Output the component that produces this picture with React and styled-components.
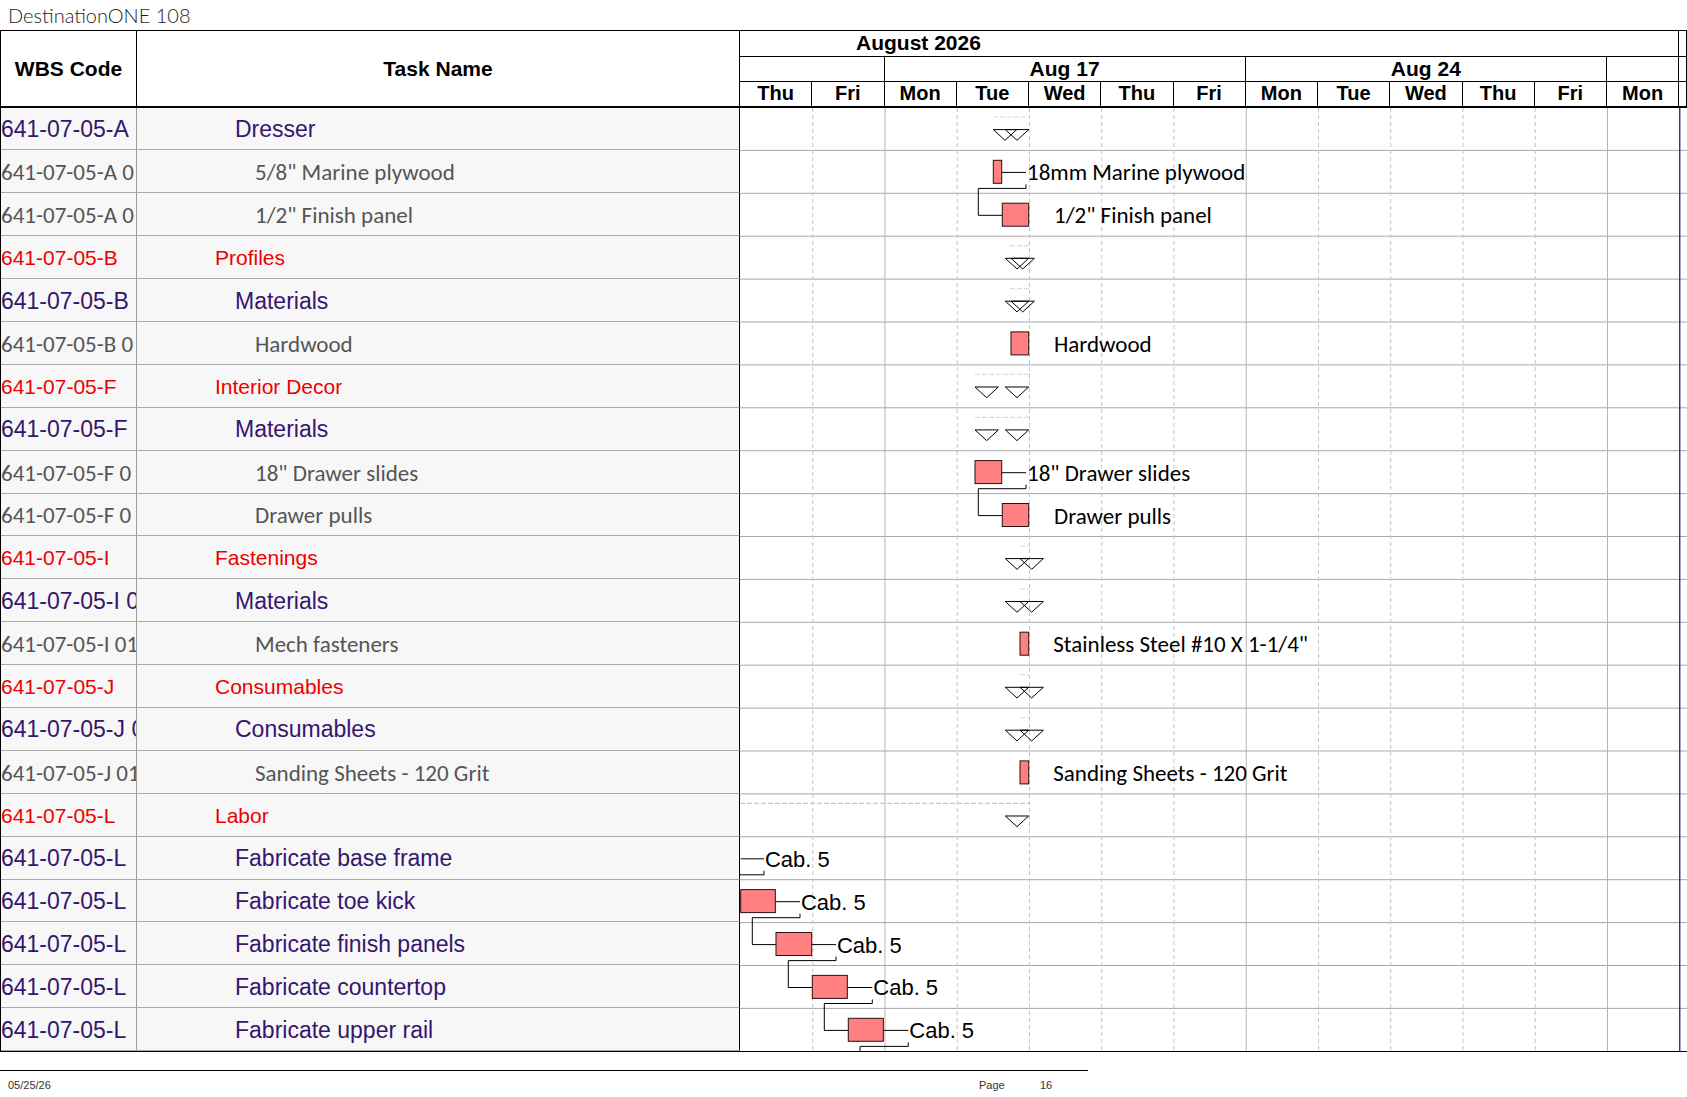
import React from "react";
import styled, { createGlobalStyle, css } from "styled-components";

const DAY_W = 72.25;
const ROW_H = 42.9;
const CHART_W = 947;

const ARIAL = '"Liberation Sans", Arial, sans-serif';
const CALIBRI = 'Carlito, Calibri, Lato, "Open Sans", sans-serif';

const kinds = {
  group: { color: "#ee0000", font: ARIAL, size: 21, indent: 78 },
  sub: { color: "#35166f", font: ARIAL, size: 23, indent: 98 },
  item: { color: "#555555", font: CALIBRI, size: 23, indent: 118 },
};

const rows = [
  { wbs: "641-07-05-A", name: "Dresser", kind: "sub" },
  { wbs: "641-07-05-A 0", name: '5/8" Marine plywood', kind: "item" },
  { wbs: "641-07-05-A 0", name: '1/2" Finish panel', kind: "item" },
  { wbs: "641-07-05-B", name: "Profiles", kind: "group" },
  { wbs: "641-07-05-B", name: "Materials", kind: "sub" },
  { wbs: "641-07-05-B 0", name: "Hardwood", kind: "item" },
  { wbs: "641-07-05-F", name: "Interior Decor", kind: "group" },
  { wbs: "641-07-05-F", name: "Materials", kind: "sub" },
  { wbs: "641-07-05-F 0", name: '18" Drawer slides', kind: "item" },
  { wbs: "641-07-05-F 0", name: "Drawer pulls", kind: "item" },
  { wbs: "641-07-05-I", name: "Fastenings", kind: "group" },
  { wbs: "641-07-05-I 01", name: "Materials", kind: "sub" },
  { wbs: "641-07-05-I 01", name: "Mech fasteners", kind: "item" },
  { wbs: "641-07-05-J", name: "Consumables", kind: "group" },
  { wbs: "641-07-05-J 01", name: "Consumables", kind: "sub" },
  { wbs: "641-07-05-J 01", name: "Sanding Sheets - 120 Grit", kind: "item" },
  { wbs: "641-07-05-L", name: "Labor", kind: "group" },
  { wbs: "641-07-05-L", name: "Fabricate base frame", kind: "sub" },
  { wbs: "641-07-05-L", name: "Fabricate toe kick", kind: "sub" },
  { wbs: "641-07-05-L", name: "Fabricate finish panels", kind: "sub" },
  { wbs: "641-07-05-L", name: "Fabricate countertop", kind: "sub" },
  { wbs: "641-07-05-L", name: "Fabricate upper rail", kind: "sub" },
];

const days = ["Thu", "Fri", "Mon", "Tue", "Wed", "Thu", "Fri", "Mon", "Tue", "Wed", "Thu", "Fri", "Mon"];
const mondays = [2, 7, 12];

// chart items, x in px from the chart's left edge
const bars = [
  { r: 1, x1: 253.3, x2: 261.7, lead: 286, label: "18mm Marine plywood" },
  { r: 2, x1: 262.3, x2: 288.7, labelX: 314, label: '1/2" Finish panel' },
  { r: 5, x1: 271, x2: 288.7, labelX: 314, label: "Hardwood" },
  { r: 8, x1: 235, x2: 261.7, lead: 286, label: '18" Drawer slides' },
  { r: 9, x1: 262.3, x2: 288.7, labelX: 314, label: "Drawer pulls" },
  { r: 12, x1: 280, x2: 288.7, labelX: 313.3, label: 'Stainless Steel #10 X 1-1/4"' },
  { r: 15, x1: 280, x2: 288.7, labelX: 313.3, label: "Sanding Sheets - 120 Grit" },
  { r: 17, x1: 0.7, x2: 0.7, lead: 24, label: "Cab. 5", arial: true, noBox: true },
  { r: 18, x1: 0.7, x2: 35.3, lead: 60, label: "Cab. 5", arial: true },
  { r: 19, x1: 36, x2: 71.7, lead: 96, label: "Cab. 5", arial: true },
  { r: 20, x1: 72.3, x2: 107.3, lead: 132.3, label: "Cab. 5", arial: true },
  { r: 21, x1: 108.3, x2: 143.3, lead: 168.3, label: "Cab. 5", arial: true },
];

const links = [
  { r: 1, from: 286, turn: 238.3, to: 262.3 },
  { r: 8, from: 286, turn: 238.3, to: 262.3 },
  { r: 17, from: 24, turn: -20, to: 0.7 },
  { r: 18, from: 60, turn: 12.3, to: 36 },
  { r: 19, from: 96, turn: 48.3, to: 72.3 },
  { r: 20, from: 132.3, turn: 84.3, to: 108.3 },
  { r: 21, from: 168.3, turn: 120, to: 144.3 },
];

const summaries = [
  { r: 0, xs: [253.3, 265.3], dash: [253, 289] },
  { r: 3, xs: [265.3, 271], dash: [270, 289] },
  { r: 4, xs: [265.3, 271], dash: [270, 289] },
  { r: 6, xs: [235, 265.3], dash: [235, 289] },
  { r: 7, xs: [235, 265.3], dash: [235, 289] },
  { r: 10, xs: [265.3, 280], dash: [280, 289] },
  { r: 11, xs: [265.3, 280], dash: [280, 289] },
  { r: 13, xs: [265.3, 280], dash: [280, 289] },
  { r: 14, xs: [265.3, 280], dash: [280, 289] },
  { r: 16, xs: [265.3], dash: [0, 289], strong: true },
];

const GlobalStyle = createGlobalStyle`
  * { box-sizing: border-box; }
  html, body { margin: 0; padding: 0; background: #fff; }
  body { font-family: ${ARIAL}; color: #000; }
`;

const Page = styled.div`
  width: 1687px;
  height: 1097px;
  overflow: hidden;
  background: #fff;
`;

const Title = styled.div`
  height: 30px;
  padding-left: 8px;
  display: flex;
  align-items: center;
  font-family: Lato, "Open Sans", sans-serif;
  font-weight: 300;
  font-size: 20px;
  color: #1e1e1e;
`;

const Sheet = styled.div`
  width: 1687px;
  border-top: 1.5px solid #000;
  border-left: 1px solid #000;
  border-bottom: 1.5px solid #000;
`;

const Header = styled.div`
  display: grid;
  grid-template-columns: 136px 603px ${CHART_W}px;
  grid-template-rows: 25.5px 25.5px 25.5px;
`;

const ColumnHead = styled.div`
  grid-row: 1 / 4;
  display: flex;
  align-items: center;
  justify-content: center;
  padding-top: 2px;
  border-right: 1px solid #000;
  border-bottom: 2px solid #000;
  font-weight: bold;
  font-size: 21px;
`;

const Timescale = styled.div`
  grid-column: 3;
  grid-row: 1 / 4;
  display: grid;
  grid-template-columns: repeat(13, ${DAY_W}px) 1fr;
  grid-template-rows: 25.5px 25.5px 25.5px;
`;

const ScaleCell = styled.div`
  grid-column: span ${(p) => p.$span || 1};
  display: flex;
  align-items: center;
  justify-content: ${(p) => (p.$left ? "flex-start" : "center")};
  padding-left: ${(p) => p.$left || 0}px;
  border-right: 1px solid #000;
  border-bottom: ${(p) => (p.$thick ? 2 : 1)}px solid #000;
  font-weight: bold;
  font-size: ${(p) => p.$size || 20}px;
  white-space: nowrap;
`;

const Body = styled.div`
  display: grid;
  grid-template-columns: 136px 603px ${CHART_W}px;
  grid-auto-rows: ${ROW_H}px;
`;

const kindText = css`
  color: ${(p) => kinds[p.$kind].color};
  font-family: ${(p) => kinds[p.$kind].font};
  font-size: ${(p) => kinds[p.$kind].size}px;
`;

const WbsCell = styled.div`
  display: flex;
  align-items: center;
  padding-top: 2px;
  overflow: hidden;
  white-space: nowrap;
  background: #f7f7f7;
  border-right: 1px solid #9a9a9a;
  border-bottom: 1px solid #a8a8a8;
  ${kindText}
`;

const TaskCell = styled.div`
  display: flex;
  align-items: center;
  padding-top: 2px;
  overflow: hidden;
  white-space: nowrap;
  padding-left: ${(p) => kinds[p.$kind].indent}px;
  background: #f7f7f7;
  border-right: 1px solid #000;
  border-bottom: 1px solid #a8a8a8;
  ${kindText}
`;

const Chart = styled.svg`
  grid-column: 3;
  grid-row: 1 / span ${rows.length};
  display: block;
  background: #fff;
  overflow: hidden;
`;

const Footer = styled.div`
  margin-top: 17.5px;
  width: 1088px;
  border-top: 1px solid #000;
  height: 28px;
  padding-left: 8px;
  padding-top: 2px;
  display: grid;
  grid-template-columns: 971px 61px auto;
  align-items: center;
  font-size: 11px;
  color: #333;
`;

const top = (r) => r * ROW_H;

const GanttChart = () => {
  const height = rows.length * ROW_H;
  return (
    <Chart width={CHART_W} height={height} viewBox={`0 0 ${CHART_W} ${height}`}>
      {rows.slice(0, -1).map((_, r) => (
        <line key={`h${r}`} x1="0" x2={CHART_W} y1={top(r + 1) - 0.5} y2={top(r + 1) - 0.5} stroke="#a8a8a8" strokeWidth="1" />
      ))}
      {days.slice(1).map((_, i) => {
        const x = (i + 1) * DAY_W + 0.5;
        const solid = mondays.includes(i + 1);
        return (
          <line
            key={`v${i}`}
            x1={x}
            x2={x}
            y1="0"
            y2={height}
            stroke={solid ? "#b4b4b4" : "#c4c4c4"}
            strokeWidth="1"
            strokeDasharray={solid ? undefined : "4 3"}
          />
        );
      })}
      <line x1={13 * DAY_W + 0.5} x2={13 * DAY_W + 0.5} y1="0" y2={height} stroke="#1c1c8e" strokeWidth="1.3" />

      {summaries.map((s) => (
        <g key={`s${s.r}`}>
          <line
            x1={s.dash[0]}
            x2={s.dash[1]}
            y1={top(s.r) + 9}
            y2={top(s.r) + 9}
            stroke={s.strong ? "#c6c6c6" : "#dcdcdc"}
            strokeWidth="1.2"
            strokeDasharray="5 2"
          />
          {s.xs.map((x) => (
            <path
              key={x}
              d={`M${x} ${top(s.r) + 21.6} h23.4 l-11.7 10.7 z`}
              fill="none"
              stroke="#000"
              strokeWidth="1"
            />
          ))}
        </g>
      ))}

      {links.map((l) => {
        const y0 = top(l.r) + 33.5;
        const y1 = top(l.r) + 37.5;
        const y2 = top(l.r + 1) + 21.5;
        return (
          <path
            key={`l${l.r}`}
            d={`M${l.from} ${y0} V${y1} H${l.turn} V${y2} H${l.to}`}
            fill="none"
            stroke="#000"
            strokeWidth="1"
          />
        );
      })}

      {bars.map((b) => {
        const cy = top(b.r) + 21.5;
        return (
          <g key={`b${b.r}`}>
            {!b.noBox && (
              <rect x={b.x1} y={top(b.r) + 9.4} width={b.x2 - b.x1} height="23" fill="#ff8080" stroke="#2a1010" strokeWidth="1" />
            )}
            {b.lead && <line x1={b.x2} x2={b.lead} y1={cy} y2={cy} stroke="#000" strokeWidth="1" />}
            <text
              x={b.lead ? b.lead + 1 : b.labelX}
              y={top(b.r) + 29.5}
              fontFamily={b.arial ? ARIAL : CALIBRI}
              fontSize={b.arial ? 22 : 23}
              fill="#000"
            >
              {b.label}
            </text>
          </g>
        );
      })}
    </Chart>
  );
};

const App = () => (
  <Page>
    <GlobalStyle />
    <Title>DestinationONE 108</Title>
    <Sheet>
      <Header>
        <ColumnHead>WBS Code</ColumnHead>
        <ColumnHead>Task Name</ColumnHead>
        <Timescale>
          <ScaleCell $span={13} $left={116} $size={21}>
            August 2026
          </ScaleCell>
          <ScaleCell />
          <ScaleCell $span={2} />
          <ScaleCell $span={5} $size={21}>
            Aug 17
          </ScaleCell>
          <ScaleCell $span={5} $size={21}>
            Aug 24
          </ScaleCell>
          <ScaleCell />
          <ScaleCell />
          {days.map((d, i) => (
            <ScaleCell key={i} $thick>
              {d}
            </ScaleCell>
          ))}
          <ScaleCell $thick />
        </Timescale>
      </Header>
      <Body>
        {rows.map((row, i) => (
          <React.Fragment key={i}>
            <WbsCell $kind={row.kind} style={{ gridRow: i + 1 }}>
              {row.wbs}
            </WbsCell>
            <TaskCell $kind={row.kind} style={{ gridRow: i + 1 }}>
              {row.name}
            </TaskCell>
          </React.Fragment>
        ))}
        <GanttChart />
      </Body>
    </Sheet>
    <Footer>
      <span>05/25/26</span>
      <span>Page</span>
      <span>16</span>
    </Footer>
  </Page>
);

export default App;
